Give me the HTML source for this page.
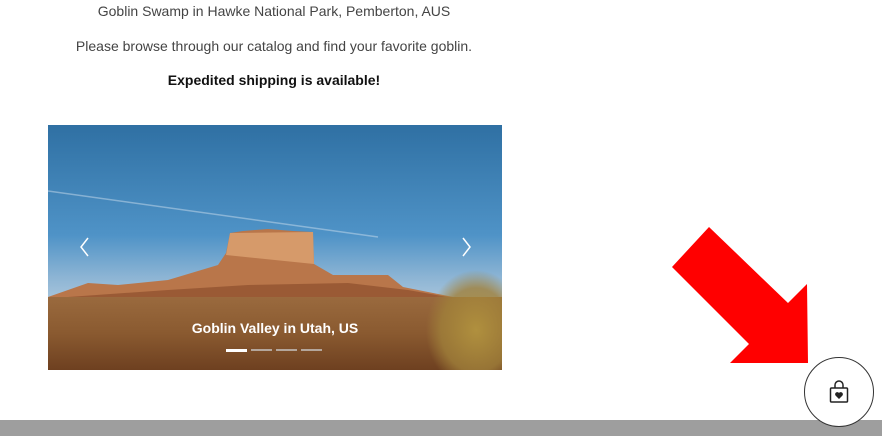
<!DOCTYPE html>
<html><head><meta charset="utf-8"><style>
body{margin:0;width:882px;height:436px;overflow:hidden;background:#fff;font-family:"Liberation Sans",sans-serif;position:relative}
.t{position:absolute;left:0;width:548px;text-align:center;font-size:14px;color:#444}
.bar{position:absolute;left:0;top:420px;width:882px;height:16px;background:#9e9e9e}
.circ{position:absolute;left:804px;top:357px;width:68px;height:68px;border-radius:50%;background:#fff;border:1px solid #333}
</style></head><body>
<div class="t" style="top:3px">Goblin Swamp in Hawke National Park, Pemberton, AUS</div>
<div class="t" style="top:38px">Please browse through our catalog and find your favorite goblin.</div>
<div class="t" style="top:72px;font-weight:bold;color:#111">Expedited shipping is available!</div>
<svg style="position:absolute;left:48px;top:125px" width="454" height="245" viewBox="0 0 454 245">
<defs>
<linearGradient id="sky" x1="0" y1="0" x2="0" y2="1">
<stop offset="0" stop-color="#2f70a3"/><stop offset="0.45" stop-color="#4f93c7"/><stop offset="0.62" stop-color="#8cb4d4"/><stop offset="0.72" stop-color="#a9c6dc"/></linearGradient>
<linearGradient id="gr" x1="0" y1="0" x2="0" y2="1">
<stop offset="0" stop-color="#9a6a3e"/><stop offset="0.5" stop-color="#8a5a30"/><stop offset="1" stop-color="#6e4020"/></linearGradient>
<radialGradient id="bush"><stop offset="0" stop-color="#b0903e"/><stop offset="0.7" stop-color="#a0803a" stop-opacity="0.8"/><stop offset="1" stop-color="#a0803a" stop-opacity="0"/></radialGradient>
</defs>
<rect width="454" height="245" fill="url(#sky)"/>
<path d="M0,66 L330,112" stroke="#c9dcec" stroke-width="1.5" opacity="0.5"/>
<rect y="172" width="454" height="73" fill="url(#gr)"/>
<path d="M0,172 L40,158 L70,160 L120,155 L170,140 L178,128 L182,108 L195,106 L220,104 L245,106 L265,107 L266,139 L285,150 L340,150 L355,162 L405,172 Z" fill="#b9764a"/>
<path d="M182,108 L265,107 L266,139 L178,130 Z" fill="#d69a6a"/>
<path d="M120,165 L200,160 L300,158 L360,165 L400,172 L20,172 Z" fill="#8d4f2c" opacity="0.7"/>
<ellipse cx="428" cy="205" rx="50" ry="60" fill="url(#bush)"/>
<path d="M40,113 L33,122 L40,131" stroke="#fff" stroke-width="1.5" fill="none"/>
<path d="M415,113 L422,122 L415,131" stroke="#fff" stroke-width="1.5" fill="none"/>
<text x="227" y="208" text-anchor="middle" font-family="Liberation Sans" font-weight="bold" font-size="14" fill="#fff">Goblin Valley in Utah, US</text>
<rect x="178" y="224" width="21" height="3" fill="#fff"/>
<rect x="203" y="224" width="21" height="2" fill="#ccc" opacity=".7"/>
<rect x="228" y="224" width="21" height="2" fill="#ccc" opacity=".7"/>
<rect x="253" y="224" width="21" height="2" fill="#ccc" opacity=".7"/>
</svg>
<div class="bar"></div>
<svg style="position:absolute;left:0;top:0" width="882" height="436">
<polygon points="709,227 672,267 749,344 730,363 808,363 807,284 788,303" fill="#ff0000"/>
</svg>
<div class="circ"></div>
<svg style="position:absolute;left:828px;top:380px" width="22" height="24" viewBox="0 0 22 24">
<path d="M7,8 V5 A4,4 0 0 1 15,5 V8" stroke="#222" stroke-width="1.5" fill="none"/>
<rect x="2.5" y="8" width="17" height="14" rx="1" stroke="#222" stroke-width="1.5" fill="none"/>
<path d="M11,19 L7.5,15.5 A2,2 0 0 1 11,13 A2,2 0 0 1 14.5,15.5 Z" fill="#222"/>
</svg>
</body></html>
